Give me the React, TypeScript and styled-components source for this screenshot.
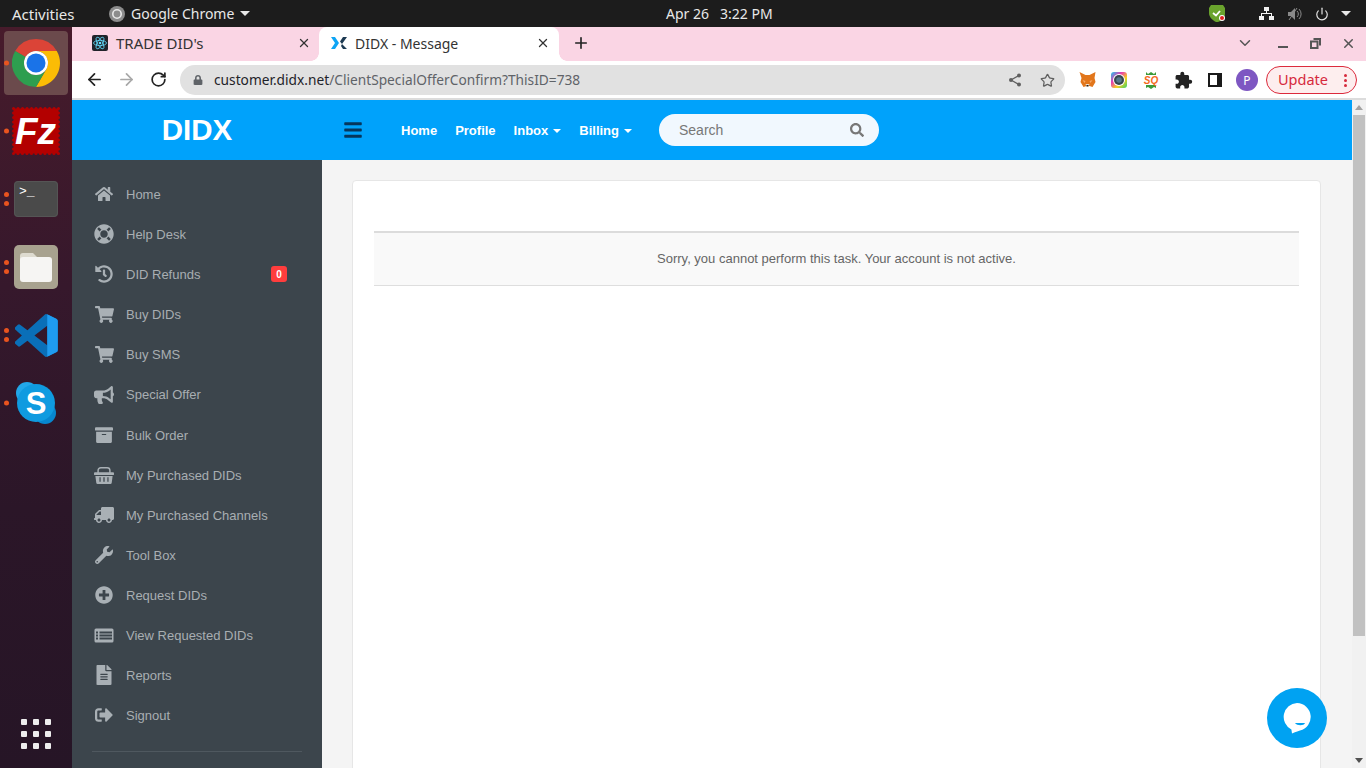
import React from "react";
import styled, { createGlobalStyle } from "styled-components";
import { ArrowLeft, ArrowRight, RotateCw, Star, ChevronDown, X, Plus, Power } from "lucide-react";
import {
  FaHome, FaLifeRing, FaHistory, FaShoppingCart, FaBullhorn, FaArchive,
  FaTruck, FaWrench, FaPlusCircle, FaFileAlt, FaSignOutAlt, FaLock, FaSearch, FaBars,
} from "react-icons/fa";
import { MdExtension } from "react-icons/md";

const Global = createGlobalStyle`
  html, body { margin: 0; padding: 0; height: 100%; overflow: hidden; }
  * { box-sizing: border-box; }
  body { font-family: "Liberation Sans", Arial, sans-serif; }
`;

const Screen = styled.div`
  width: 1366px; height: 768px; display: flex; flex-direction: column; overflow: hidden; position: relative;
`;
const TopBar = styled.div`
  height: 27px; background: #1c1c1c; color: #e8e8e8; display: flex; align-items: center; flex: none;
  font-family: "Noto Sans", sans-serif; font-size: 14px; padding-left: 12px;
`;
const Activities = styled.span` width: 97px; font-size: 15px; `;
const AppMenu = styled.div` display: flex; align-items: center; gap: 6px; width: 557px; `;
const Caret = styled.span`
  display: inline-block; width: 0; height: 0; border-left: 5px solid transparent; border-right: 5px solid transparent;
  border-top: 5px solid #e8e8e8;
`;
const Clock = styled.div` display: flex; gap: 11px; width: 542px; `;
const Tray = styled.div` display: flex; align-items: center; `;
const TraySlot = styled.div<{ $w: number; $after?: number }>`
  width: ${p => p.$w}px; margin-right: ${p => p.$after ?? 0}px; display: flex; justify-content: center; align-items: center;
`;

const Body = styled.div` flex: 1; display: flex; min-height: 0; `;
const Dock = styled.div`
  width: 72px; flex: none; display: flex; flex-direction: column; justify-content: space-between;
  padding: 4px 0 19px; background: linear-gradient(180deg, #471b2b 0%, #36182c 35%, #2b1628 65%, #261526 100%);
`;
const DockList = styled.div` display: flex; flex-direction: column; `;
const DockSlot = styled.div`
  position: relative; height: 68px; display: flex; align-items: flex-start; justify-content: center;
`;
const DockTile = styled.div<{ $active?: boolean }>`
  width: 64px; height: 64px; border-radius: 4px; display: flex; align-items: center; justify-content: center;
  background: ${p => (p.$active ? "#6b4a4c" : "transparent")};
`;
const Pips = styled.div`
  position: absolute; left: 4px; top: 32px; transform: translateY(-50%); display: flex; flex-direction: column; gap: 4px;
`;
const Pip = styled.span` width: 5px; height: 5px; border-radius: 50%; background: #e9541f; `;
const AppGrid = styled.div` display: grid; grid-template-columns: repeat(3, 6px); gap: 6px; justify-content: center; `;
const AppDot = styled.span` width: 6px; height: 6px; border-radius: 1px; background: #eeeeee; `;

const Browser = styled.div` flex: 1; display: flex; flex-direction: column; min-width: 0; `;
const TabStrip = styled.div`
  height: 34px; background: #fad5e4; display: flex; align-items: stretch; flex: none; color: #333;
  font-family: "Noto Sans", sans-serif;
`;
const Tab = styled.div<{ $active?: boolean; $w: number; $pad: number; $right: number }>`
  position: relative; width: ${p => p.$w}px; padding: 0 ${p => p.$right}px 2px ${p => p.$pad}px; display: flex; align-items: center; gap: 8px;
  background: ${p => (p.$active ? "#fff" : "transparent")};
  border-radius: 8px 8px 0 0;
  ${p => p.$active && `
    &::before, &::after { content: ""; position: absolute; bottom: 0; width: 8px; height: 8px; background: radial-gradient(circle at var(--c) 0, #fad5e4 7.5px, #fff 8px); }
    &::before { left: -8px; --c: 0; }
    &::after { right: -8px; --c: 100%; }
  `}
`;
const TabTitle = styled.span<{ $size: number }>` flex: 1; white-space: nowrap; font-size: ${p => p.$size}px; `;
const NewTab = styled.div` width: 44px; display: flex; align-items: center; justify-content: center; padding-bottom: 2px; color: #222; `;
const StripFill = styled.div` flex: 1; `;
const WindowButtons = styled.div` display: flex; align-items: center; color: #555; padding-bottom: 2px; `;
const WinSlot = styled.div<{ $w: number }>` width: ${p => p.$w}px; display: flex; justify-content: center; align-items: center; `;
const MinLine = styled.span` width: 10px; height: 2px; background: #555; margin-top: 8px; `;

const Toolbar = styled.div`
  height: 39px; flex: none; background: #fff; border-bottom: 2px solid #dcdcdc; display: flex; align-items: center;
  padding: 1px 9px 0 6px;
`;
const NavBtn = styled.div<{ $muted?: boolean }>`
  width: 32px; display: flex; justify-content: center; padding-bottom: 2px; color: ${p => (p.$muted ? "#a8a8a8" : "#222")};
`;
const Omnibox = styled.div`
  margin-left: 6px; width: 885px; height: 30px; border-radius: 15px; background: #e1e1e1; display: flex; align-items: center;
  padding: 0 2px 0 13px; font-family: "Noto Sans", sans-serif; font-size: 13.72px; color: #5f6368;
`;
const Url = styled.div` flex: 1; margin-left: 11px; white-space: nowrap; padding-bottom: 2px; `;
const Host = styled.span` color: #1f2329; `;
const OmniIcon = styled.div` width: 32px; display: flex; justify-content: center; color: #5f5f5f; `;
const Extensions = styled.div` display: flex; align-items: center; margin-left: 6px; `;
const ExtSlot = styled.div` width: 32px; display: flex; justify-content: center; align-items: center; color: #222; `;
const Avatar = styled.div`
  width: 22px; height: 22px; border-radius: 50%; background: #7e57c2; color: #fff; font-size: 12px;
  display: flex; align-items: center; justify-content: center; font-family: "Noto Sans", sans-serif;
`;
const UpdatePill = styled.div`
  margin-left: 3px; width: 91px; height: 28px; border: 1px solid #dc2a3c; border-radius: 14px; background: #fdeeee; color: #d6293c;
  display: flex; align-items: center; justify-content: space-between; padding: 0 9px 0 11px;
  font-family: "Noto Sans", sans-serif; font-size: 14.5px;
`;
const UpdateLabel = styled.span` padding-bottom: 2px; `;
const Kebab = styled.div` display: flex; flex-direction: column; gap: 2px; `;
const KebabDot = styled.span` width: 3px; height: 3px; border-radius: 50%; background: #d6293c; `;

const Viewport = styled.div` flex: 1; display: flex; min-height: 0; `;
const Page = styled.div` flex: 1; display: flex; flex-direction: column; min-width: 0; background: #f4f4f4; `;
const Header = styled.header` height: 60px; flex: none; background: #00a2fb; display: flex; align-items: center; `;
const Logo = styled.div` width: 250px; text-align: center; color: #fff; font-weight: 700; font-size: 29.5px; `;
const Burger = styled.div` width: 79px; padding-left: 21px; color: #06365c; display: flex; font-size: 20px; `;
const NavLinks = styled.nav` display: flex; gap: 18px; width: 258px; `;
const NavLink = styled.span`
  color: #fff; font-weight: 700; font-size: 13px; display: flex; align-items: center; gap: 5px;
`;
const NavCaret = styled.span`
  width: 0; height: 0; border-left: 4px solid transparent; border-right: 4px solid transparent; border-top: 4px solid #fff; margin-top: 2px;
`;
const SearchBox = styled.div`
  width: 220px; height: 32px; border-radius: 16px; background: #f1f8fe; display: flex; align-items: center; justify-content: space-between;
  padding: 0 15px 0 20px; color: #777; font-size: 14px;
`;
const Main = styled.div` flex: 1; display: flex; min-height: 0; `;
const Sidebar = styled.aside` width: 250px; flex: none; background: #3c454c; padding: 14px 20px 0 22px; overflow: hidden; `;
const MenuRow = styled.div<{ $h?: number }>`
  height: ${p => p.$h ?? 40}px; display: flex; align-items: center; color: #a8aeb2; font-size: 13px;
`;
const MenuIcon = styled.div<{ $size: number; $flip?: boolean }>`
  width: 20px; margin-right: 12px; display: flex; justify-content: center; font-size: ${p => p.$size}px; color: #a9b0b5;
  ${p => p.$flip && "transform: scaleX(-1);"}
`;
const MenuLabel = styled.span` flex: 1; `;
const Badge = styled.span`
  width: 16px; height: 16px; border-radius: 3px; background: #ff3d3d; color: #fff; font-weight: 700; font-size: 10px;
  display: flex; align-items: center; justify-content: center; margin-right: 15px;
`;
const SideRule = styled.hr` border: 0; border-top: 1px solid #4f585f; margin: 16px 0 0 -2px; `;
const Content = styled.main` flex: 1; padding: 20px 31px 0 30px; overflow: hidden; `;
const Card = styled.div`
  height: 640px; background: #fff; border: 1px solid #e6e6e6; border-radius: 4px; padding: 50px 21px 0;
`;
const Message = styled.div`
  height: 55px; background: #f9f9f9; border-top: 2px solid #dcdcdc; border-bottom: 1px solid #dedede; display: flex; align-items: center;
  justify-content: center; color: #666; font-size: 13px; padding-bottom: 2px;
`;
const Scrollbar = styled.div`
  width: 14px; flex: none; background: #f1f1f1; display: flex; flex-direction: column; align-items: center; padding-top: 5px;
`;
const ScrollUp = styled.span` width: 0; height: 0; border-left: 4px solid transparent; border-right: 4px solid transparent; border-bottom: 5px solid #a3a3a3; `;
const Thumb = styled.div` width: 12px; height: 521px; background: #c1c1c1; margin-top: 5px; flex: none; `;
const ScrollGap = styled.div` flex: 1; `;
const ScrollDown = styled.span` width: 0; height: 0; border-left: 4px solid transparent; border-right: 4px solid transparent; border-top: 5px solid #505050; margin-bottom: 5px; `;
const ChatBubble = styled.div`
  position: absolute; right: 39px; bottom: 20px; width: 60px; height: 60px; border-radius: 50%; background: #00a2f2;
  display: flex; align-items: center; justify-content: center;
`;

const ChromeLogo = ({ size }: { size: number }) => (
  <svg width={size} height={size} viewBox="0 0 48 48">
    <path fill="#db4437" d="M24 0A24 24 0 0 1 44.78 12L24 12A12 12 0 0 0 13.6 18L3.2 12A24 24 0 0 1 24 0Z" />
    <path fill="#fbbc05" d="M44.78 12A24 24 0 0 1 24 48L34.39 30A12 12 0 0 0 24 12Z" />
    <path fill="#2e9e4f" d="M3.2 12A24 24 0 0 0 24 48L34.39 30A12 12 0 0 1 13.6 18Z" />
    <circle cx="24" cy="24" r="12" fill="#fff" />
    <circle cx="24" cy="24" r="9.5" fill="#1a73e8" />
  </svg>
);
const FileZilla = () => (
  <svg width="48" height="48" viewBox="0 0 48 48">
    <rect x="1.5" y="1.5" width="45" height="45" fill="#b30000" stroke="#b30000" strokeWidth="3" strokeDasharray="0.1 4.4" strokeLinecap="round" />
    <text x="3" y="37" fontFamily="Liberation Sans" fontStyle="italic" fontWeight="700" fontSize="37" fill="#fff">Fz</text>
  </svg>
);
const Terminal = () => (
  <svg width="44" height="36" viewBox="0 0 44 36">
    <rect width="44" height="36" rx="4" fill="#4a4a4a" />
    <rect x="0.5" y="0.5" width="43" height="35" rx="3.5" fill="none" stroke="#555" />
    <text x="5" y="14" fontFamily="Liberation Mono" fontSize="13" fill="#fff">&gt;_</text>
  </svg>
);
const Files = () => (
  <svg width="44" height="44" viewBox="0 0 44 44">
    <rect width="44" height="44" rx="5" fill="#a8a28f" />
    <path fill="#dedbd0" d="M6 11a3 3 0 0 1 3-3h10l4 4v6H6Z" />
    <rect x="6" y="12" width="32" height="25" rx="3" fill="#f6f5f3" />
  </svg>
);
const VSCode = () => (
  <svg width="43" height="43" viewBox="0 0 100 100">
    <path fill="#0a6fb8" d="M96 10.8 75.4.9a6.2 6.2 0 0 0-7.1 1.2L29 38 11.9 25a4.2 4.2 0 0 0-5.3.2L1.1 30.3a4.2 4.2 0 0 0 0 6.2L15.9 50 1.1 63.5a4.2 4.2 0 0 0 0 6.2l5.5 5a4.2 4.2 0 0 0 5.3.2L29 62l39.3 35.9a6.2 6.2 0 0 0 7.1 1.2L96 89.2a6.2 6.2 0 0 0 3.5-5.6V16.4a6.2 6.2 0 0 0-3.5-5.6ZM75 72.7 45.2 50 75 27.3Z" />
    <path fill="#1f9cf0" d="M75 .7 96 10.8a6.2 6.2 0 0 1 3.5 5.6V83.6a6.2 6.2 0 0 1-3.5 5.6L75 99.3Z" />
  </svg>
);
const Skype = () => (
  <svg width="44" height="44" viewBox="0 0 44 44">
    <circle cx="13" cy="12" r="11" fill="#22a7e8" />
    <circle cx="31" cy="32" r="11" fill="#0787cf" />
    <circle cx="22" cy="22" r="19" fill="#0f9be0" />
    <text x="22" y="33" textAnchor="middle" fontFamily="Liberation Sans" fontWeight="700" fontSize="31" fill="#fff">S</text>
  </svg>
);
const ReactFav = () => (
  <svg width="16" height="16" viewBox="0 0 16 16">
    <rect width="16" height="16" rx="2" fill="#20232a" />
    <g fill="none" stroke="#61dafb" strokeWidth="0.8">
      <ellipse cx="8" cy="8" rx="6.5" ry="2.6" />
      <ellipse cx="8" cy="8" rx="6.5" ry="2.6" transform="rotate(60 8 8)" />
      <ellipse cx="8" cy="8" rx="6.5" ry="2.6" transform="rotate(120 8 8)" />
    </g>
    <circle cx="8" cy="8" r="1.3" fill="#61dafb" />
  </svg>
);
const DidxFav = () => (
  <svg width="16" height="12" viewBox="0 0 16 12">
    <path fill="#0ea5f5" d="M0 0h4l4 6-4 6H0l4-6Z" />
    <path fill="#1d3a52" d="M16 0h-4L9 4.5 11 7ZM16 12h-4L10 9l1-2Z" />
  </svg>
);
const Fox = () => (
  <svg width="17" height="16" viewBox="0 0 16 16">
    <path fill="#e2761b" d="M0 0l6 3h4l6-3-1 6 1 4-3 5-3-1H7l-3 1-3-5 1-4Z" />
    <path fill="#f6a766" d="M3 8l3 1-1 2ZM13 8l-3 1 1 2Z" />
    <path fill="#eddcc9" d="M6 12h4l-1 2.5H7Z" />
    <path fill="#2b2118" d="M7 13h2v1.5H7Z" />
  </svg>
);
const Lens = () => (
  <svg width="16" height="16" viewBox="0 0 16 16">
    <defs>
      <linearGradient id="rb" x1="0" y1="0" x2="1" y2="1">
        <stop offset="0" stopColor="#18c8f0" />
        <stop offset="0.35" stopColor="#e93cae" />
        <stop offset="0.65" stopColor="#f8d020" />
        <stop offset="1" stopColor="#32d06a" />
      </linearGradient>
    </defs>
    <rect width="16" height="16" rx="3" fill="url(#rb)" />
    <circle cx="8" cy="8" r="6" fill="#fff" />
    <circle cx="8" cy="8" r="5" fill="#37474f" />
    <circle cx="8" cy="8" r="2.8" fill="#56788a" />
  </svg>
);
const SqExt = () => (
  <svg width="16" height="18" viewBox="0 0 16 18">
    <path fill="#3d9a3a" d="M3 1l2 2 3-2 3 2 2-2v3H3ZM3 14h10v3l-2-1-3 2-3-2-2 1Z" />
    <text x="8" y="13" textAnchor="middle" fontFamily="Liberation Sans" fontStyle="italic" fontWeight="700" fontSize="10" fill="#f56a1d">SQ</text>
  </svg>
);
const SidePanel = () => (
  <svg width="14" height="14" viewBox="0 0 14 14">
    <rect width="14" height="14" fill="#1a1a1a" />
    <rect x="2" y="2" width="7" height="10" fill="#fff" />
  </svg>
);
const ShareNodes = () => (
  <svg width="14" height="14" viewBox="0 0 14 14" fill="#5f5f5f" stroke="#5f5f5f">
    <path fill="none" strokeWidth="1.2" d="M11 2.5 3 7l8 4.5" />
    <circle cx="11" cy="2.5" r="2" stroke="none" />
    <circle cx="3" cy="7" r="2" stroke="none" />
    <circle cx="11" cy="11.5" r="2" stroke="none" />
  </svg>
);
const Shield = () => (
  <svg width="18" height="17" viewBox="0 0 18 17">
    <path fill="#6aa32d" d="M3 0h12l2 3v6c0 4-4 7-7 8H8C4 15 1 12 1 8V3Z" />
    <path fill="none" stroke="#fff" strokeWidth="1.8" d="M5 8l3 2.5L12 6" />
    <circle cx="14" cy="13" r="3" fill="#fff" />
    <circle cx="14" cy="13" r="2" fill="#e02020" />
  </svg>
);
const Network = () => (
  <svg width="15" height="14" viewBox="0 0 15 14" fill="#f0f0f0">
    <rect x="5" y="0" width="5" height="4" />
    <rect x="0" y="9" width="5" height="4" />
    <rect x="10" y="9" width="5" height="4" />
    <path d="M7 4h1v2h5v3h-1V7H3v2H2V6h5Z" />
  </svg>
);
const Muted = () => (
  <svg width="15" height="14" viewBox="0 0 15 14">
    <path fill="#8a8a8a" d="M0 5h3l4-4v12l-4-4H0Z" />
    <path fill="none" stroke="#8a8a8a" strokeWidth="1" d="M9 4a4 4 0 0 1 0 6M11 2a7 7 0 0 1 0 10M1 13L9 1" />
  </svg>
);
const ChatGlyph = () => (
  <svg width="30" height="32" viewBox="0 0 30 32">
    <path fill="#fff" d="M15 1a14 14 0 0 1 3 27.6C14 30 11 31 10 31.5l-.6-4A14 14 0 0 1 15 1Z" />
    <path fill="#00a2f2" d="M13 21h10c-1 3-8 3-10 0Z" />
  </svg>
);
const BasketIcon = () => (
  <svg width="22" height="19" viewBox="0 0 22 19" fill="currentColor">
    <path fill="none" stroke="currentColor" strokeWidth="1.6" d="M4.5 7V4a3 3 0 0 1 3-3h7a3 3 0 0 1 3 3v3" />
    <rect x="0" y="6" width="22" height="3" rx="1" />
    <path fillRule="evenodd" d="M1.5 10h19l-1 7.5a1.5 1.5 0 0 1-1.5 1.3H4a1.5 1.5 0 0 1-1.5-1.3ZM6 11.5h1.3v5H6Zm4.3 0h1.4v5h-1.4Zm4.4 0H16v5h-1.3Z" />
  </svg>
);
const ListIcon = () => (
  <svg width="20" height="15" viewBox="0 0 20 15">
    <rect x="0.5" y="0.5" width="19" height="14" rx="1.5" fill="currentColor" />
    <path fill="#3c454c" d="M2 3.5h2v2H2Zm3.5 0H18v2H5.5ZM2 6.5h2v2H2Zm3.5 0H18v2H5.5ZM2 9.5h2v2H2Zm3.5 0H18v2H5.5Z" />
  </svg>
);

const menu: { icon: React.ReactNode; label: string; badge?: string; h?: number; size: number; flip?: boolean }[] = [
  { icon: <FaHome />, label: "Home", size: 18 },
  { icon: <FaLifeRing />, label: "Help Desk", size: 20 },
  { icon: <FaHistory />, label: "DID Refunds", badge: "0", size: 18 },
  { icon: <FaShoppingCart />, label: "Buy DIDs", size: 19 },
  { icon: <FaShoppingCart />, label: "Buy SMS", size: 19 },
  { icon: <FaBullhorn />, label: "Special Offer", h: 41, size: 20 },
  { icon: <FaArchive />, label: "Bulk Order", size: 18 },
  { icon: <BasketIcon />, label: "My Purchased DIDs", size: 18 },
  { icon: <FaTruck />, label: "My Purchased Channels", size: 20, flip: true },
  { icon: <FaWrench />, label: "Tool Box", size: 18 },
  { icon: <FaPlusCircle />, label: "Request DIDs", size: 18 },
  { icon: <ListIcon />, label: "View Requested DIDs", size: 18 },
  { icon: <FaFileAlt />, label: "Reports", size: 20 },
  { icon: <FaSignOutAlt />, label: "Signout", size: 18 },
];

const dock: { node: React.ReactNode; pips: number; active?: boolean }[] = [
  { node: <ChromeLogo size={48} />, pips: 1, active: true },
  { node: <FileZilla />, pips: 1 },
  { node: <Terminal />, pips: 2 },
  { node: <Files />, pips: 2 },
  { node: <VSCode />, pips: 2 },
  { node: <Skype />, pips: 1 },
];

export default function App() {
  return (
    <Screen>
      <Global />
      <TopBar>
        <Activities>Activities</Activities>
        <AppMenu>
          <svg width="16" height="16" viewBox="0 0 16 16">
            <circle cx="8" cy="8" r="8" fill="#8c8c8c" />
            <circle cx="8" cy="8" r="4.2" fill="none" stroke="#e8e8e8" strokeWidth="1.6" />
          </svg>
          <span>Google Chrome</span>
          <Caret />
        </AppMenu>
        <Clock>
          <span>Apr 26</span>
          <span>3:22 PM</span>
        </Clock>
        <Tray>
          <TraySlot $w={18} $after={25}><Shield /></TraySlot>
          <TraySlot $w={30}><Network /></TraySlot>
          <TraySlot $w={28}><Muted /></TraySlot>
          <TraySlot $w={26}><Power size={14} /></TraySlot>
          <TraySlot $w={22}><Caret /></TraySlot>
        </Tray>
      </TopBar>
      <Body>
        <Dock>
          <DockList>
            {dock.map((d, i) => (
              <DockSlot key={i}>
                <DockTile $active={d.active}>{d.node}</DockTile>
                <Pips>
                  {Array.from({ length: d.pips }).map((_, j) => <Pip key={j} />)}
                </Pips>
              </DockSlot>
            ))}
          </DockList>
          <AppGrid>
            {Array.from({ length: 9 }).map((_, i) => <AppDot key={i} />)}
          </AppGrid>
        </Dock>
        <Browser>
          <TabStrip>
            <Tab $w={247} $pad={20} $right={8}>
              <ReactFav />
              <TabTitle $size={15}>TRADE DID's</TabTitle>
              <X size={14} strokeWidth={2.2} />
            </Tab>
            <Tab $active $w={240} $pad={12} $right={9}>
              <DidxFav />
              <TabTitle $size={14}>DIDX - Message</TabTitle>
              <X size={14} strokeWidth={2.2} />
            </Tab>
            <NewTab><Plus size={18} strokeWidth={2.2} /></NewTab>
            <StripFill />
            <WindowButtons>
              <WinSlot $w={42}><ChevronDown size={18} strokeWidth={2} /></WinSlot>
              <WinSlot $w={34}><MinLine /></WinSlot>
              <WinSlot $w={30}>
                <svg width="11" height="11" viewBox="0 0 11 11" fill="none" stroke="#555" strokeWidth="2">
                  <rect x="1" y="3.5" width="6.5" height="6.5" />
                  <path d="M3.5 1H10v6.5" />
                </svg>
              </WinSlot>
              <WinSlot $w={36}><X size={15} strokeWidth={2.4} /></WinSlot>
            </WindowButtons>
          </TabStrip>
          <Toolbar>
            <NavBtn><ArrowLeft size={19} strokeWidth={2.2} /></NavBtn>
            <NavBtn $muted><ArrowRight size={19} strokeWidth={2.2} /></NavBtn>
            <NavBtn><RotateCw size={17} strokeWidth={2.4} /></NavBtn>
            <Omnibox>
              <FaLock size={10} color="#5f6368" />
              <Url><Host>customer.didx.net</Host>/ClientSpecialOfferConfirm?ThisID=738</Url>
              <OmniIcon><ShareNodes /></OmniIcon>
              <OmniIcon><Star size={15} strokeWidth={2} /></OmniIcon>
            </Omnibox>
            <Extensions>
              <ExtSlot><Fox /></ExtSlot>
              <ExtSlot><Lens /></ExtSlot>
              <ExtSlot><SqExt /></ExtSlot>
              <ExtSlot><MdExtension size={19} /></ExtSlot>
              <ExtSlot><SidePanel /></ExtSlot>
              <ExtSlot><Avatar>P</Avatar></ExtSlot>
            </Extensions>
            <UpdatePill>
              <UpdateLabel>Update</UpdateLabel>
              <Kebab><KebabDot /><KebabDot /><KebabDot /></Kebab>
            </UpdatePill>
          </Toolbar>
          <Viewport>
            <Page>
              <Header>
                <Logo>DIDX</Logo>
                <Burger><FaBars /></Burger>
                <NavLinks>
                  <NavLink>Home</NavLink>
                  <NavLink>Profile</NavLink>
                  <NavLink>Inbox <NavCaret /></NavLink>
                  <NavLink>Billing <NavCaret /></NavLink>
                </NavLinks>
                <SearchBox>
                  <span>Search</span>
                  <FaSearch size={14} />
                </SearchBox>
              </Header>
              <Main>
                <Sidebar>
                  {menu.map(m => (
                    <MenuRow key={m.label} $h={m.h}>
                      <MenuIcon $size={m.size} $flip={m.flip}>{m.icon}</MenuIcon>
                      <MenuLabel>{m.label}</MenuLabel>
                      {m.badge && <Badge>{m.badge}</Badge>}
                    </MenuRow>
                  ))}
                  <SideRule />
                </Sidebar>
                <Content>
                  <Card>
                    <Message>Sorry, you cannot perform this task. Your account is not active.</Message>
                  </Card>
                </Content>
              </Main>
            </Page>
            <Scrollbar>
              <ScrollUp />
              <Thumb />
              <ScrollGap />
              <ScrollDown />
            </Scrollbar>
          </Viewport>
        </Browser>
      </Body>
      <ChatBubble><ChatGlyph /></ChatBubble>
    </Screen>
  );
}
